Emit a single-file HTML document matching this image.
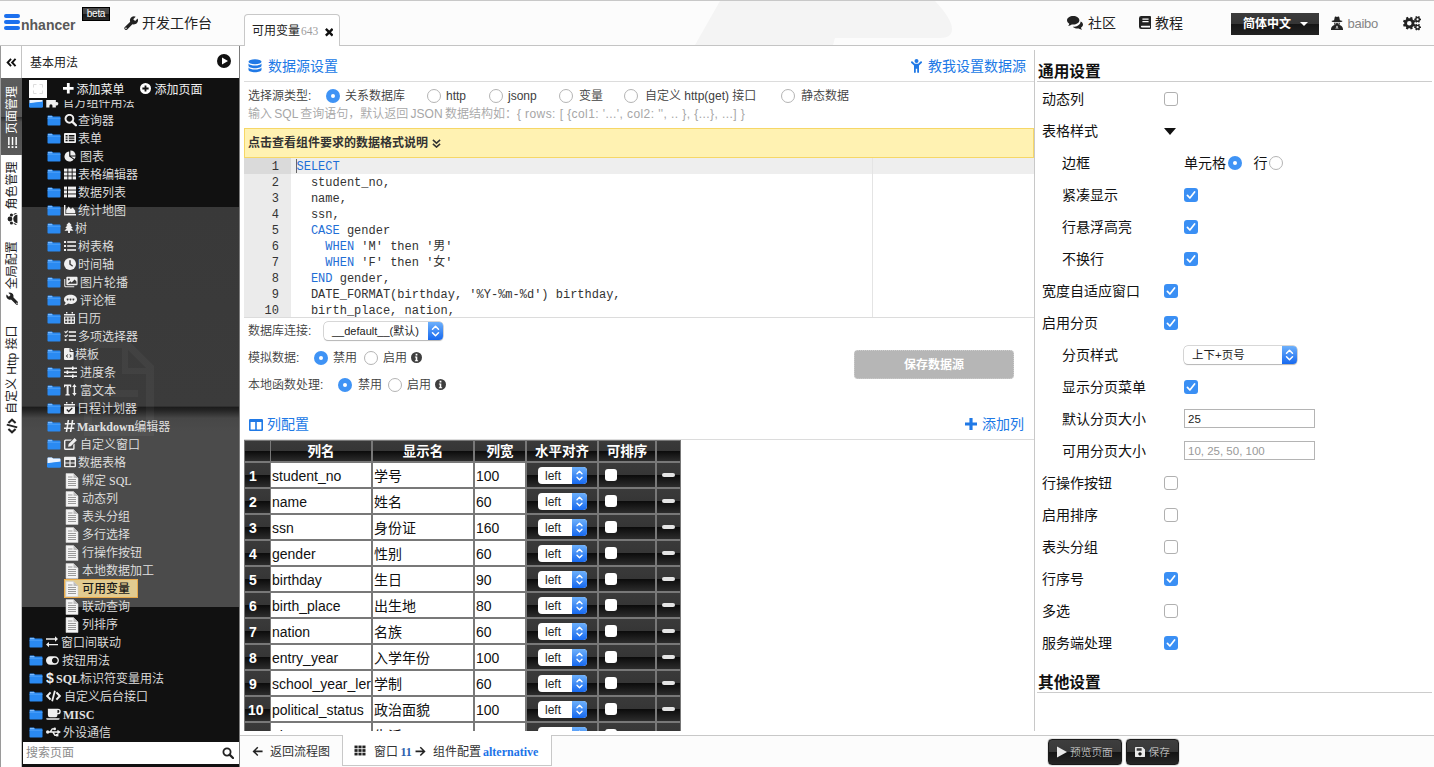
<!DOCTYPE html>
<html lang="zh-CN">
<head>
<meta charset="utf-8">
<title>Enhancer 开发工作台</title>
<style>
*{box-sizing:border-box;margin:0;padding:0}
html,body{width:1434px;height:767px;overflow:hidden;background:#fff}
body{position:relative;font-family:"Liberation Serif","Noto Sans CJK SC",serif;font-size:13px;color:#222}
.abs{position:absolute}
.sans{font-family:"Liberation Sans","Noto Sans CJK SC",sans-serif}
svg{display:block}
/* header */
#hdr{left:0;top:0;width:1434px;height:46px;background:#fcfcfc;border-top:1px solid #c8c8c8;border-bottom:1px solid #c4c4c4}
#hdr .t{position:absolute;white-space:nowrap;color:#222}
/* left vertical bar */
#vbar{left:0;top:46px;width:22px;height:721px;background:#fff;border-left:1px solid #9a9a9a}
.vtab{position:absolute;left:0;width:21px;white-space:nowrap}
.vtxt{position:absolute;transform-origin:0 0;transform:rotate(-90deg);white-space:nowrap;font-size:12px;line-height:20px;height:20px}
/* sidebar */
#side{left:22px;top:46px;width:218px;height:721px;background:#111}
#sidehead{left:0;top:0;width:218px;height:32px;background:#fff;border-right:1px solid #bbb}
.tr{position:absolute;height:18px;line-height:18px;color:#e2e2e2;font-size:12px;white-space:nowrap;font-weight:350}
.tr b{font-weight:bold}
.fold{position:absolute;width:14px;height:11px}
/* center */
#main{left:240px;top:46px;width:794px;height:689px;background:#fff;overflow:hidden}
.blue{color:#2079e6}
.lbl{position:absolute;font-size:12px;line-height:16px;color:#404040;white-space:nowrap;font-weight:350}
.radio{position:absolute;width:14px;height:14px;border-radius:50%;border:1px solid #b4b4b4;background:#fff}
.radio.on{border:none;background:#3f93f5}
.radio.on:after{content:"";position:absolute;left:4.700px;top:4.700px;width:4.600px;height:4.600px;border-radius:50%;background:#fff}
.mono{font-family:"Liberation Mono","Noto Sans CJK SC",monospace;font-size:12px;line-height:16px;height:16px}
.kw{color:#1f6fd6}
.th{position:absolute;background:linear-gradient(#3a3a3a 0,#363636 48%,#0c0c0c 52%,#2c2c2c 100%);color:#fff;font-weight:bold;font-size:13.500px;line-height:22px;text-align:center;white-space:nowrap;overflow:hidden}
.tdw{position:absolute;height:24px;background:#fff;color:#111;font-size:14px;line-height:27px;padding-left:1px;white-space:nowrap;overflow:hidden}
/* right */
#right{left:1034px;top:46px;width:400px;height:689px;background:#fff}
#right:before{content:"";position:absolute;left:0;top:4px;width:1px;height:681px;background:#c8c8c8}
.rl{position:absolute;font-size:14px;line-height:20px;color:#111;white-space:nowrap}
.cb{position:absolute;width:14px;height:14px;border-radius:3px;border:1px solid #b0b0b0;background:#fff}
.cb.on{border:none;background:#3a8ff4}
/* bottom */
#bot{left:240px;top:735px;width:1194px;height:32px;background:#fcfcfc;border-top:1px solid #c8c8c8}
</style>
</head>
<body>
<div id="hdr" class="abs"><svg class="abs" style="left:690px;top:0" width="270" height="44" viewBox="0 0 270 44"><path d="M5 44 L30 0 H245 Q262 18 262 28 Q262 37 250 37 H145 L143 44z" fill="#f4f4f4"/></svg>
<div class="abs" style="left:4px;top:13px;width:16px;height:4px;border-radius:2px;background:#1c70ee"></div>
<div class="abs" style="left:4px;top:19px;width:16px;height:4px;border-radius:2px;background:#1c70ee"></div>
<div class="abs" style="left:4px;top:25px;width:16px;height:4px;border-radius:2px;background:#1c70ee"></div>
<div class="t sans" style="left:21px;top:14px;font-size:14px;line-height:20px;font-weight:bold;color:#585858">nhancer</div>
<div class="abs sans" style="left:82px;top:6px;width:28px;height:14px;background:linear-gradient(#4a4a4a 0,#444 48%,#181818 52%,#2a2a2a 100%);border:1px solid #000;color:#fff;font-size:10px;line-height:11px;text-align:center;letter-spacing:-0.3px">beta</div>
<div class="abs" style="left:124px;top:15px;color:#222"><svg width="14" height="14" viewBox="0 0 13.5 13.5" fill="currentColor" style=""><path d="M13.120 2.520A3.900 3.900 0 1 1 11.280 .680L8.890 3.070 10.730 4.910z"/><path d="M7.400 6.400L2 11.800" stroke="currentColor" stroke-width="3.300" stroke-linecap="round"/><circle cx="1.900" cy="11.900" r=".75" fill="#fdfdfd"/></svg></div>
<div class="t sans" style="left:142px;top:12px;font-size:14px;line-height:20px">开发工作台</div>
<div class="abs" style="left:244px;top:13px;width:96px;height:33px;background:#fff;border:1px solid #c8c8c8;border-bottom:none;border-radius:4px 4px 0 0"></div>
<div class="t sans" style="left:252px;top:20.500px;font-size:12px;line-height:18px">可用变量</div>
<div class="t" style="left:301px;top:20.500px;font-size:12px;line-height:18px;color:#9c9c9c;font-size:11.500px">643</div>
<div class="abs" style="left:324.500px;top:27px;color:#111"><svg width="8.5" height="8.5" viewBox="0 0 10 10" fill="currentColor" style=""><path d="M2 0L5 3 8 0 10 2 7 5 10 8 8 10 5 7 2 10 0 8 3 5 0 2z"/></svg></div>
<div class="abs" style="left:1067px;top:15px;color:#222"><svg width="16" height="14" viewBox="0 0 16 14" fill="currentColor" style=""><path d="M6.200 0C9.600 0 12.400 1.900 12.400 4.300S9.600 8.600 6.200 8.600c-.5 0-1 0-1.400-.1C3.700 9.300 2.400 9.800 1 9.800c.7-.6 1.100-1.300 1.300-2.100C.9 6.900 0 5.700 0 4.300 0 1.900 2.800 0 6.200 0z"/><path d="M13.600 5.400c1.500.7 2.400 1.900 2.400 3.200 0 1.300-.8 2.400-2.100 3.100.2.700.6 1.400 1.300 2-1.300 0-2.500-.5-3.500-1.200-.4.100-.9.100-1.300.1-1.900 0-3.600-.7-4.600-1.800 4.300.100 7.800-2.300 7.800-5.400z"/></svg></div>
<div class="t sans" style="left:1088px;top:12px;font-size:14px;line-height:20px">社区</div>
<div class="abs" style="left:1139px;top:15px;color:#222"><svg width="12" height="13" viewBox="0 0 12 13" fill="currentColor" style=""><path fill-rule="evenodd" d="M2.200 0H11a1 1 0 0 1 1 1V12a1 1 0 0 1-1 1H2.200A2.200 2.200 0 0 1 0 10.800V2.200A2.200 2.200 0 0 1 2.200 0zM3.400 2.600v1.200h6.200V2.600zM3.400 5v1.200h6.200V5zM2.700 9.800a.8.800 0 0 0 0 1.600H11V9.800z"/></svg></div>
<div class="t sans" style="left:1155px;top:12px;font-size:14px;line-height:20px">教程</div>
<div class="abs sans" style="left:1231px;top:12px;width:88px;height:22px;background:linear-gradient(#3c3c3c 0,#353535 48%,#151515 52%,#222 100%);color:#fff;font-size:12px;font-weight:bold;line-height:22px;padding-left:12px">简体中文<span style="position:absolute;left:69px;top:9px;width:0;height:0;border:4px solid transparent;border-top:4px solid #fff"></span></div>
<div class="abs" style="left:1331px;top:15px;color:#222"><svg width="12" height="14" viewBox="0 0 12 14" fill="currentColor" style=""><path d="M3.100 4.300L3.700 1.200C3.800.7 4.300.4 4.800.600L6 1.100 7.200.600c.5-.2 1 .1 1.100.600L8.900 4.300C10.300 4.500 11.400 4.800 11.400 5.200c0 .600-2.400 1.100-5.400 1.100S.600 5.800.600 5.200C.600 4.800 1.700 4.500 3.100 4.300z"/><path fill-rule="evenodd" d="M3 6.800c.9.200 1.900.300 3 .300s2.100-.1 3-.3c0 .8-.2 1.500-.6 2.100C10.400 9.500 12 11 12 13.200V14H0v-.8C0 11 1.600 9.500 3.600 8.900 3.200 8.300 3 7.600 3 6.800zM5.300 9.400l-.6 3.600h.6l.5-2.600zM6.700 9.400l-.5 1 .5 2.600h.6zM3.600 7.400c0 .5.400.8.900.8s.9-.3.900-.8zM6.600 7.400c0 .5.400.8.900.8s.9-.3.900-.8z"/></svg></div>
<div class="t sans" style="left:1347.500px;top:12.500px;font-size:13px;line-height:20px;color:#858585;letter-spacing:-0.25px">baibo</div>
<div class="abs" style="left:1403px;top:15px;color:#222"><svg width="18" height="14.5" viewBox="0 0 18 14.500" fill="currentColor" style=""><path fill-rule="evenodd" d="M11.34 7.96L12.64 8.63L11.80 10.67L10.40 10.23L9.33 11.30L9.77 12.70L7.73 13.54L7.06 12.24L5.54 12.24L4.87 13.54L2.83 12.70L3.27 11.30L2.20 10.23L0.80 10.67L-0.04 8.63L1.26 7.96L1.26 6.44L-0.04 5.77L0.80 3.73L2.20 4.17L3.27 3.10L2.83 1.70L4.87 0.86L5.54 2.16L7.06 2.16L7.73 0.86L9.77 1.70L9.33 3.10L10.40 4.17L11.80 3.73L12.64 5.77L11.34 6.44zM8.60 7.20a2.3 2.3 0 1 0 -4.60 0a2.3 2.3 0 1 0 4.60 0zM17.07 2.60L18.02 2.64L18.02 4.16L17.07 4.20L16.53 5.14L16.97 5.98L15.65 6.74L15.14 5.94L14.06 5.94L13.55 6.74L12.23 5.98L12.67 5.14L12.13 4.20L11.18 4.16L11.18 2.64L12.13 2.60L12.67 1.66L12.23 0.82L13.55 0.06L14.06 0.86L15.14 0.86L15.65 0.06L16.97 0.82L16.53 1.66zM15.70 3.40a1.1 1.1 0 1 0 -2.20 0a1.1 1.1 0 1 0 2.20 0zM17.07 10.40L18.02 10.44L18.02 11.96L17.07 12.00L16.53 12.94L16.97 13.78L15.65 14.54L15.14 13.74L14.06 13.74L13.55 14.54L12.23 13.78L12.67 12.94L12.13 12.00L11.18 11.96L11.18 10.44L12.13 10.40L12.67 9.46L12.23 8.62L13.55 7.86L14.06 8.66L15.14 8.66L15.65 7.86L16.97 8.62L16.53 9.46zM15.70 11.20a1.1 1.1 0 1 0 -2.20 0a1.1 1.1 0 1 0 2.20 0z"/></svg></div></div>
<div id="vbar" class="abs"><div class="abs" style="left:0;top:0;width:21px;height:32px;border-right:1px solid #c4c4c4;background:#fff"></div>
<div class="abs" style="left:5px;top:12px;color:#111"><svg width="11" height="9" viewBox="0 0 11 10" fill="currentColor" style=""><path d="M5 1L1.200 5l3.800 4M10 1L6.200 5l3.800 4" fill="none" stroke="currentColor" stroke-width="2.100"/></svg></div>
<div class="abs" style="left:20px;top:32px;width:1px;height:689px;background:#c4c4c4"></div>
<div class="vtab" style="top:32px;height:77px;background:linear-gradient(#5c5c5c 0,#575757 50%,#2e2e2e 51%,#505050 57%,#5a5a5a 100%);color:#fff;"><div class="vtxt sans" style="left:1px;top:77px;width:77px;padding-left:6px;display:flex;align-items:center"><span style="display:inline-block;margin-right:2px"><svg width="13" height="11" viewBox="0 0 12 12" fill="currentColor" style=""><rect x="0" y="1" width="2" height="2"/><rect x="3.2" y="1.2" width="8.8" height="1.6"/><rect x="0" y="5" width="2" height="2"/><rect x="3.2" y="5.2" width="8.8" height="1.6"/><rect x="0" y="9" width="2" height="2"/><rect x="3.2" y="9.2" width="8.8" height="1.6"/></svg></span><span>页面管理</span></div></div>
<div class="vtab" style="top:109px;height:77px;color:#222;"><div class="vtxt sans" style="left:1px;top:77px;width:77px;padding-left:7.4px;display:flex;align-items:center"><span style="display:inline-block;margin-right:3.1px"><svg width="12" height="11" viewBox="0 0 13 11.500" fill="currentColor" style=""><circle cx="6.500" cy="3" r="2.600"/><path d="M2 11c0-2.600 2-4.400 4.500-4.400S11 8.400 11 11z"/><circle cx="2.200" cy="4.600" r="1.700"/><circle cx="10.800" cy="4.600" r="1.700"/><path d="M0 10c0-1.800 1-3 2.400-3.200C1.600 7.800 1.200 9 1.200 10zM13 10c0-1.800-1-3-2.400-3.200.8 1 1.200 2.200 1.200 3.200z"/></svg></span><span>角色管理</span></div></div>
<div class="vtab" style="top:186px;height:80px;color:#222;"><div class="vtxt sans" style="left:1px;top:80px;width:80px;padding-left:7px;display:flex;align-items:center"><span style="display:inline-block;margin-right:3.2px"><svg width="12.5" height="12.5" viewBox="0 0 13.500 13.500" fill="currentColor" style=""><path d="M13.120 2.520A3.900 3.900 0 1 1 11.280 .680L8.890 3.070 10.730 4.910z"/><path d="M7.400 6.400L2 11.800" stroke="currentColor" stroke-width="3.300" stroke-linecap="round"/><circle cx="1.900" cy="11.900" r=".75" fill="#fdfdfd"/></svg></span><span>全局配置</span></div></div>
<div class="vtab" style="top:266px;height:130px;color:#222;"><div class="vtxt sans" style="left:1px;top:130px;width:130px;padding-left:8px;display:flex;align-items:center"><span style="display:inline-block;margin-right:3.9px"><svg width="16" height="12" viewBox="0 0 15 12" fill="currentColor" style=""><path d="M4.600 2.400L1.200 6l3.400 3.600M10.400 2.400L13.800 6l-3.400 3.600" fill="none" stroke="currentColor" stroke-width="2" stroke-linejoin="miter"/><path d="M8.900 .8L6.100 11.200" stroke="currentColor" stroke-width="1.800"/></svg></span><span>自定义 Http 接口</span></div></div></div>
<div id="side" class="abs"><div class="abs" style="left:0;top:161px;width:217px;height:400px;background:linear-gradient(#393939 0,#3b3b3b 49.800%,#1b1b1b 50%,#242424 50.800%,#474747 52.800%,#4b4b4b 56%,#4b4b4b 100%)"></div>
<svg class="abs" style="left:62px;top:294px;opacity:.035" width="70" height="96" viewBox="0 0 70 96"><path fill-rule="evenodd" d="M0 0h44l26 26v70H0zM8 8v80h54V34H38V8zM44 10v18h18z" fill="#fff"/><path d="M16 50h38v7H16zM16 64h38v7H16z" fill="#fff"/></svg>
<div class="abs" style="left:7px;top:51px"><svg width="14" height="11" viewBox="0 0 14 11"><path d="M0.500 1.200a.8.800 0 0 1 .8-.8h3.600l1.200 1.200h6.600a.8.800 0 0 1 .8.800v7.400a.8.800 0 0 1-.8.800H1.300a.8.800 0 0 1-.8-.8z" fill="#2a8af2"/><path d="M.5 1.200a.8.800 0 0 1 .8-.8h3.600l1.200 1.200h6.600a.8.800 0 0 1 .8.800V5L.5 6.500z" fill="#eaf3ff"/><path d="M0 6.200L14 4.600v5.200a.8.800 0 0 1-.8.800H.8a.8.800 0 0 1-.8-.8z" fill="#2a8af2"/></svg></div><div class="abs" style="left:24px;top:50.0px;color:#f0f0f0"><svg width="13" height="12" viewBox="0 0 12.500 12" fill="currentColor" style=""><path d="M0 4h3.200a1.700 1.700 0 1 1 3 0H9.600v2.600a1.700 1.700 0 1 1 0 3V12H6.200V10.200a1.500 1.500 0 1 0-3 0V12H0z" transform="translate(0 -0.400)"/></svg></div><div class="tr" style="left:40.5px;top:48px">官方组件用法</div>
<div class="abs" style="left:25px;top:69px"><svg width="14" height="11" viewBox="0 0 14 11"><path d="M0.500 1.200a.8.800 0 0 1 .8-.8h3.600l1.200 1.200h6.600a.8.800 0 0 1 .8.800v7.400a.8.800 0 0 1-.8.800H1.300a.8.800 0 0 1-.8-.8z" fill="#2a8af2"/><path d="M1 1.300h3.800l.8.900H1z" fill="#9ccbff"/><path d="M.5 3.200h13v.6H.5z" fill="#56a6f8"/></svg></div><div class="abs" style="left:42px;top:67.5px;color:#f0f0f0"><svg width="13" height="13" viewBox="0 0.600 12 12" fill="currentColor" style=""><circle cx="5" cy="5" r="3.6" fill="none" stroke="currentColor" stroke-width="1.8"/><path d="M7.6 7.6 L11 11" stroke="currentColor" stroke-width="2.2" stroke-linecap="round"/></svg></div><div class="tr" style="left:56px;top:66px">查询器</div>
<div class="abs" style="left:25px;top:87px"><svg width="14" height="11" viewBox="0 0 14 11"><path d="M0.500 1.200a.8.800 0 0 1 .8-.8h3.600l1.200 1.200h6.600a.8.800 0 0 1 .8.800v7.400a.8.800 0 0 1-.8.800H1.300a.8.800 0 0 1-.8-.8z" fill="#2a8af2"/><path d="M1 1.300h3.800l.8.900H1z" fill="#9ccbff"/><path d="M.5 3.200h13v.6H.5z" fill="#56a6f8"/></svg></div><div class="abs" style="left:42px;top:86.0px;color:#f0f0f0"><svg width="12" height="12" viewBox="0 0 12 12" fill="currentColor" style=""><path fill-rule="evenodd" d="M1 1h10a1 1 0 0 1 1 1v8a1 1 0 0 1-1 1H1a1 1 0 0 1-1-1V2a1 1 0 0 1 1-1zM1.6 3v1.4h2V3zM4.8 3v1.4h5.6V3zM1.6 5.4v1.4h2V5.4zM4.8 5.4v1.4h5.6V5.4zM1.6 7.8v1.4h2V7.8zM4.8 7.8v1.4h5.6V7.8z"/></svg></div><div class="tr" style="left:56px;top:84px">表单</div>
<div class="abs" style="left:25px;top:105px"><svg width="14" height="11" viewBox="0 0 14 11"><path d="M0.500 1.200a.8.800 0 0 1 .8-.8h3.600l1.200 1.200h6.600a.8.800 0 0 1 .8.800v7.400a.8.800 0 0 1-.8.800H1.300a.8.800 0 0 1-.8-.8z" fill="#2a8af2"/><path d="M1 1.300h3.800l.8.900H1z" fill="#9ccbff"/><path d="M.5 3.200h13v.6H.5z" fill="#56a6f8"/></svg></div><div class="abs" style="left:42px;top:104.0px;color:#f0f0f0"><svg width="12" height="12" viewBox="0 0 12 12" fill="currentColor" style=""><path d="M5.2 1.6 A5 5 0 1 0 9.6 9.4 L5.2 6.6z"/><path d="M6.4 0.4 A5 5 0 0 1 11.6 5.4 L6.4 5.4z"/><path d="M6.8 6.6 L11.6 6.6 A5 5 0 0 1 10.6 8.9z"/></svg></div><div class="tr" style="left:58px;top:102px">图表</div>
<div class="abs" style="left:25px;top:123px"><svg width="14" height="11" viewBox="0 0 14 11"><path d="M0.500 1.200a.8.800 0 0 1 .8-.8h3.600l1.200 1.200h6.600a.8.800 0 0 1 .8.800v7.400a.8.800 0 0 1-.8.800H1.300a.8.800 0 0 1-.8-.8z" fill="#2a8af2"/><path d="M1 1.300h3.800l.8.900H1z" fill="#9ccbff"/><path d="M.5 3.200h13v.6H.5z" fill="#56a6f8"/></svg></div><div class="abs" style="left:42px;top:122.0px;color:#f0f0f0"><svg width="12" height="12" viewBox="0 0 12 12" fill="currentColor" style=""><rect x="0" y="0.6" width="3.4" height="3" /><rect x="0" y="4.5" width="3.4" height="3" /><rect x="0" y="8.4" width="3.4" height="3" /><rect x="4.3" y="0.6" width="3.4" height="3" /><rect x="4.3" y="4.5" width="3.4" height="3" /><rect x="4.3" y="8.4" width="3.4" height="3" /><rect x="8.6" y="0.6" width="3.4" height="3" /><rect x="8.6" y="4.5" width="3.4" height="3" /><rect x="8.6" y="8.4" width="3.4" height="3" /></svg></div><div class="tr" style="left:56px;top:120px">表格编辑器</div>
<div class="abs" style="left:25px;top:141px"><svg width="14" height="11" viewBox="0 0 14 11"><path d="M0.500 1.200a.8.800 0 0 1 .8-.8h3.600l1.200 1.200h6.600a.8.800 0 0 1 .8.800v7.400a.8.800 0 0 1-.8.800H1.300a.8.800 0 0 1-.8-.8z" fill="#2a8af2"/><path d="M1 1.300h3.800l.8.900H1z" fill="#9ccbff"/><path d="M.5 3.200h13v.6H.5z" fill="#56a6f8"/></svg></div><div class="abs" style="left:42px;top:140.0px;color:#f0f0f0"><svg width="12" height="12" viewBox="0 0 12 12" fill="currentColor" style=""><rect x="0" y="0.6" width="3" height="3"/><rect x="4" y="0.6" width="8" height="3"/><rect x="0" y="4.5" width="3" height="3"/><rect x="4" y="4.5" width="8" height="3"/><rect x="0" y="8.4" width="3" height="3"/><rect x="4" y="8.4" width="8" height="3"/></svg></div><div class="tr" style="left:56px;top:138px">数据列表</div>
<div class="abs" style="left:25px;top:159px"><svg width="14" height="11" viewBox="0 0 14 11"><path d="M0.500 1.200a.8.800 0 0 1 .8-.8h3.600l1.200 1.200h6.600a.8.800 0 0 1 .8.800v7.400a.8.800 0 0 1-.8.800H1.300a.8.800 0 0 1-.8-.8z" fill="#2a8af2"/><path d="M1 1.300h3.800l.8.900H1z" fill="#9ccbff"/><path d="M.5 3.200h13v.6H.5z" fill="#56a6f8"/></svg></div><div class="abs" style="left:42px;top:158.0px;color:#f0f0f0"><svg width="12" height="12" viewBox="0 0 12 12" fill="currentColor" style=""><path d="M0 1h1.4v9H12v1.4H0z"/><path d="M2.2 9.2V6l2.4-3.4 2.2 2.4 2-1.6 2.4 3.4v2.4z"/></svg></div><div class="tr" style="left:56px;top:156px">统计地图</div>
<div class="abs" style="left:25px;top:177px"><svg width="14" height="11" viewBox="0 0 14 11"><path d="M0.500 1.200a.8.800 0 0 1 .8-.8h3.600l1.200 1.200h6.600a.8.800 0 0 1 .8.800v7.400a.8.800 0 0 1-.8.800H1.300a.8.800 0 0 1-.8-.8z" fill="#2a8af2"/><path d="M1 1.300h3.800l.8.900H1z" fill="#9ccbff"/><path d="M.5 3.200h13v.6H.5z" fill="#56a6f8"/></svg></div><div class="abs" style="left:42px;top:176.0px;color:#f0f0f0"><svg width="10" height="12" viewBox="0.700 0 10.600 12" fill="currentColor" style=""><path d="M6 0 L9 3.2H7.6L10 6H8.2L10.8 9H7v2.4H5V9H1.2L3.8 6H2L4.4 3.2H3z"/></svg></div><div class="tr" style="left:53px;top:174px">树</div>
<div class="abs" style="left:25px;top:195px"><svg width="14" height="11" viewBox="0 0 14 11"><path d="M0.500 1.200a.8.800 0 0 1 .8-.8h3.600l1.200 1.200h6.600a.8.800 0 0 1 .8.800v7.400a.8.800 0 0 1-.8.800H1.300a.8.800 0 0 1-.8-.8z" fill="#2a8af2"/><path d="M1 1.300h3.800l.8.900H1z" fill="#9ccbff"/><path d="M.5 3.200h13v.6H.5z" fill="#56a6f8"/></svg></div><div class="abs" style="left:42px;top:194.0px;color:#f0f0f0"><svg width="12" height="12" viewBox="0 0 12 12" fill="currentColor" style=""><rect x="0" y="1" width="2" height="2"/><rect x="3.2" y="1.2" width="8.8" height="1.6"/><rect x="0" y="5" width="2" height="2"/><rect x="3.2" y="5.2" width="8.8" height="1.6"/><rect x="0" y="9" width="2" height="2"/><rect x="3.2" y="9.2" width="8.8" height="1.6"/></svg></div><div class="tr" style="left:56px;top:192px">树表格</div>
<div class="abs" style="left:25px;top:213px"><svg width="14" height="11" viewBox="0 0 14 11"><path d="M0.500 1.200a.8.800 0 0 1 .8-.8h3.600l1.200 1.200h6.600a.8.800 0 0 1 .8.800v7.400a.8.800 0 0 1-.8.800H1.300a.8.800 0 0 1-.8-.8z" fill="#2a8af2"/><path d="M1 1.300h3.800l.8.900H1z" fill="#9ccbff"/><path d="M.5 3.200h13v.6H.5z" fill="#56a6f8"/></svg></div><div class="abs" style="left:42px;top:212.0px;color:#f0f0f0"><svg width="12" height="12" viewBox="0 0 12 12" fill="currentColor" style=""><circle cx="6" cy="6" r="6"/><path d="M6 2.6V6.2L8.2 7.8" fill="none" stroke="#3a3a3a" stroke-width="1.4" stroke-linecap="round"/></svg></div><div class="tr" style="left:56px;top:210px">时间轴</div>
<div class="abs" style="left:25px;top:231px"><svg width="14" height="11" viewBox="0 0 14 11"><path d="M0.500 1.200a.8.800 0 0 1 .8-.8h3.600l1.200 1.200h6.600a.8.800 0 0 1 .8.800v7.400a.8.800 0 0 1-.8.800H1.300a.8.800 0 0 1-.8-.8z" fill="#2a8af2"/><path d="M1 1.300h3.800l.8.900H1z" fill="#9ccbff"/><path d="M.5 3.200h13v.6H.5z" fill="#56a6f8"/></svg></div><div class="abs" style="left:42px;top:230.0px;color:#f0f0f0"><svg width="14" height="12" viewBox="0 0 13.500 12" fill="currentColor" style=""><path d="M0 3v7a1.2 1.2 0 0 0 1.2 1.2H10v-1H1.4a.4.4 0 0 1-.4-.4V3z"/><path fill-rule="evenodd" d="M3 .8h9.4a.9.9 0 0 1 .9.9v6.6a.9.9 0 0 1-.9.9H3a.9.9 0 0 1-.9-.9V1.700a.9.9 0 0 1 .9-.9zM3.200 7.800h9V5.400L10.400 3.400 7.400 6.400 6.200 5.200 3.200 7.800zM4.600 2.200a1 1 0 1 0 .01 0z"/></svg></div><div class="tr" style="left:58px;top:228px">图片轮播</div>
<div class="abs" style="left:25px;top:249px"><svg width="14" height="11" viewBox="0 0 14 11"><path d="M0.500 1.200a.8.800 0 0 1 .8-.8h3.600l1.200 1.200h6.600a.8.800 0 0 1 .8.800v7.400a.8.800 0 0 1-.8.800H1.300a.8.800 0 0 1-.8-.8z" fill="#2a8af2"/><path d="M1 1.300h3.800l.8.900H1z" fill="#9ccbff"/><path d="M.5 3.200h13v.6H.5z" fill="#56a6f8"/></svg></div><div class="abs" style="left:42px;top:248.0px;color:#f0f0f0"><svg width="13" height="12" viewBox="0 0 13 12" fill="currentColor" style=""><path fill-rule="evenodd" d="M6.500 .8C10 .8 13 2.800 13 5.400S10 10 6.500 10c-.9 0-1.700-.1-2.500-.4C3 10.500 1.600 11.200.2 11.200c.8-.8 1.300-1.700 1.500-2.600C.6 7.800 0 6.700 0 5.400 0 2.800 3 .8 6.500.8zM3.600 4.600a.9.9 0 1 0 .01 0zM6.500 4.600a.9.9 0 1 0 .01 0zM9.400 4.600a.9.9 0 1 0 .01 0z"/></svg></div><div class="tr" style="left:58px;top:246px">评论框</div>
<div class="abs" style="left:25px;top:267px"><svg width="14" height="11" viewBox="0 0 14 11"><path d="M0.500 1.200a.8.800 0 0 1 .8-.8h3.600l1.200 1.200h6.600a.8.800 0 0 1 .8.800v7.400a.8.800 0 0 1-.8.800H1.300a.8.800 0 0 1-.8-.8z" fill="#2a8af2"/><path d="M1 1.300h3.800l.8.900H1z" fill="#9ccbff"/><path d="M.5 3.200h13v.6H.5z" fill="#56a6f8"/></svg></div><div class="abs" style="left:42px;top:266.0px;color:#f0f0f0"><svg width="11" height="12" viewBox="0 0 11 12" fill="currentColor" style=""><path fill-rule="evenodd" d="M2 0h1.400v1.400H2zM7.600 0H9v1.400H7.600zM0 2h11v1.600H0zM0 4.400h11V11a1 1 0 0 1-1 1H1a1 1 0 0 1-1-1zM1.200 5.600v2h2v-2zM4.500 5.600v2h2v-2zM7.800 5.600v2h2v-2zM1.200 8.800v2h2v-2zM4.500 8.800v2h2v-2zM7.800 8.800v2h2v-2z"/></svg></div><div class="tr" style="left:55px;top:264px">日历</div>
<div class="abs" style="left:25px;top:285px"><svg width="14" height="11" viewBox="0 0 14 11"><path d="M0.500 1.200a.8.800 0 0 1 .8-.8h3.600l1.200 1.200h6.600a.8.800 0 0 1 .8.800v7.400a.8.800 0 0 1-.8.800H1.300a.8.800 0 0 1-.8-.8z" fill="#2a8af2"/><path d="M1 1.300h3.800l.8.900H1z" fill="#9ccbff"/><path d="M.5 3.200h13v.6H.5z" fill="#56a6f8"/></svg></div><div class="abs" style="left:42px;top:284.0px;color:#f0f0f0"><svg width="12" height="12" viewBox="0 0 12 12" fill="currentColor" style=""><path d="M.2 1.800l.8-.8.8.8L3.400.2l.8.800L1.800 3.400z"/><path d="M.2 5.800l.8-.8.8.8L3.400 4.200l.8.800L1.800 7.400z"/><circle cx="1.600" cy="10" r="1.100"/><rect x="4.800" y="1.2" width="7.200" height="1.600"/><rect x="4.800" y="5.2" width="7.200" height="1.600"/><rect x="4.800" y="9.2" width="7.200" height="1.600"/></svg></div><div class="tr" style="left:56px;top:282px">多项选择器</div>
<div class="abs" style="left:25px;top:303px"><svg width="14" height="11" viewBox="0 0 14 11"><path d="M0.500 1.200a.8.800 0 0 1 .8-.8h3.600l1.200 1.200h6.600a.8.800 0 0 1 .8.800v7.400a.8.800 0 0 1-.8.800H1.300a.8.800 0 0 1-.8-.8z" fill="#2a8af2"/><path d="M1 1.300h3.800l.8.900H1z" fill="#9ccbff"/><path d="M.5 3.200h13v.6H.5z" fill="#56a6f8"/></svg></div><div class="abs" style="left:42px;top:302.0px;color:#f0f0f0"><svg width="10" height="12" viewBox="0 0 10 12" fill="currentColor" style=""><path fill-rule="evenodd" d="M0 1a1 1 0 0 1 1-1h4.600v3.400a.6.600 0 0 0 .6.600H9.600V11a1 1 0 0 1-1 1H1a1 1 0 0 1-1-1zM6.600 0l3 3H6.600zM3.600 6.200L1.800 8l1.800 1.800.6-.6L3 8l1.200-1.200zM6 6.200l-.6.600L6.600 8 5.400 9.200l.6.600L7.800 8z"/></svg></div><div class="tr" style="left:53px;top:300px">模板</div>
<div class="abs" style="left:25px;top:321px"><svg width="14" height="11" viewBox="0 0 14 11"><path d="M0.500 1.200a.8.800 0 0 1 .8-.8h3.600l1.200 1.200h6.600a.8.800 0 0 1 .8.800v7.400a.8.800 0 0 1-.8.800H1.300a.8.800 0 0 1-.8-.8z" fill="#2a8af2"/><path d="M1 1.300h3.800l.8.900H1z" fill="#9ccbff"/><path d="M.5 3.200h13v.6H.5z" fill="#56a6f8"/></svg></div><div class="abs" style="left:42px;top:320.0px;color:#f0f0f0"><svg width="13" height="12" viewBox="0 0 13 12" fill="currentColor" style=""><path d="M0 1.600h8v-1h1.600v1H13V3H9.600v1H8V3H0zM0 5.600h2.600v-1h1.600v1H13V7H4.200v1H2.600V7H0zM0 9.600h8v-1h1.600v1H13V11H9.600v1H8v-1H0z"/></svg></div><div class="tr" style="left:58px;top:318px">进度条</div>
<div class="abs" style="left:25px;top:339px"><svg width="14" height="11" viewBox="0 0 14 11"><path d="M0.500 1.200a.8.800 0 0 1 .8-.8h3.600l1.200 1.200h6.600a.8.800 0 0 1 .8.800v7.400a.8.800 0 0 1-.8.800H1.300a.8.800 0 0 1-.8-.8z" fill="#2a8af2"/><path d="M1 1.300h3.800l.8.900H1z" fill="#9ccbff"/><path d="M.5 3.200h13v.6H.5z" fill="#56a6f8"/></svg></div><div class="abs" style="left:42px;top:338.0px;color:#f0f0f0"><svg width="13" height="12" viewBox="0 0 13 12" fill="currentColor" style=""><path d="M0 .6h7.200v2.600H6.200l-.4-1.200H4.600v8l1.200.4v1H1.400v-1l1.200-.4v-8H1.400L1 3.200H0z"/><path d="M10.400 0l2.200 3h-1.500v6h1.500l-2.200 3-2.200-3h1.500V3H8.200z"/></svg></div><div class="tr" style="left:58px;top:336px">富文本</div>
<div class="abs" style="left:25px;top:357px"><svg width="14" height="11" viewBox="0 0 14 11"><path d="M0.500 1.200a.8.800 0 0 1 .8-.8h3.600l1.200 1.200h6.600a.8.800 0 0 1 .8.800v7.400a.8.800 0 0 1-.8.800H1.300a.8.800 0 0 1-.8-.8z" fill="#2a8af2"/><path d="M1 1.300h3.800l.8.900H1z" fill="#9ccbff"/><path d="M.5 3.200h13v.6H.5z" fill="#56a6f8"/></svg></div><div class="abs" style="left:42px;top:356.0px;color:#f0f0f0"><svg width="11" height="12" viewBox="0 0 11 12" fill="currentColor" style=""><path fill-rule="evenodd" d="M2 0h1.400v1.400H2zM7.600 0H9v1.400H7.600zM0 2h11v1.600H0zM0 4.400h11V11a1 1 0 0 1-1 1H1a1 1 0 0 1-1-1zM4.700 10.400l4-4-.9-.9-3.100 3.100L3.200 7.100l-.9.900z"/></svg></div><div class="tr" style="left:55px;top:354px">日程计划器</div>
<div class="abs" style="left:25px;top:375px"><svg width="14" height="11" viewBox="0 0 14 11"><path d="M0.500 1.200a.8.800 0 0 1 .8-.8h3.600l1.200 1.200h6.600a.8.800 0 0 1 .8.800v7.400a.8.800 0 0 1-.8.800H1.300a.8.800 0 0 1-.8-.8z" fill="#2a8af2"/><path d="M1 1.300h3.800l.8.900H1z" fill="#9ccbff"/><path d="M.5 3.200h13v.6H.5z" fill="#56a6f8"/></svg></div><div class="abs" style="left:42px;top:374.0px;color:#f0f0f0"><svg width="11" height="12" viewBox="0 0 11 12" fill="currentColor" style=""><path d="M3.600 0h1.600l-.5 3h2.600l.5-3h1.600l-.5 3H11v1.600H8.600l-.5 2.800H10.200V9H7.900l-.5 3H5.800l.5-3H3.700l-.5 3H1.600l.5-3H0V7.400h2.400l.5-2.800H.8V3h2.300zM4.500 4.600l-.5 2.800h2.600l.5-2.800z"/></svg></div><div class="tr" style="left:55px;top:372px"><b>Markdown</b>编辑器</div>
<div class="abs" style="left:25px;top:393px"><svg width="14" height="11" viewBox="0 0 14 11"><path d="M0.500 1.200a.8.800 0 0 1 .8-.8h3.600l1.200 1.200h6.600a.8.800 0 0 1 .8.800v7.400a.8.800 0 0 1-.8.800H1.300a.8.800 0 0 1-.8-.8z" fill="#2a8af2"/><path d="M1 1.300h3.800l.8.900H1z" fill="#9ccbff"/><path d="M.5 3.200h13v.6H.5z" fill="#56a6f8"/></svg></div><div class="abs" style="left:42px;top:392.0px;color:#f0f0f0"><svg width="13" height="12" viewBox="0 0 13 12" fill="currentColor" style=""><path d="M9.200 6.800l1.400-1.400V10.400A1.600 1.600 0 0 1 9 12H1.600A1.600 1.600 0 0 1 0 10.400V3A1.600 1.600 0 0 1 1.600 1.400H7.800L6.400 2.800H1.800a.4.400 0 0 0-.4.400v7a.4.400 0 0 0 .4.400h7a.4.400 0 0 0 .4-.4z"/><path d="M10.600 0l2.200 2.200-6 6-2.700.5.500-2.700zM11.400.200"/></svg></div><div class="tr" style="left:58px;top:390px">自定义窗口</div>
<div class="abs" style="left:25px;top:411px"><svg width="14" height="11" viewBox="0 0 14 11"><path d="M0.500 1.200a.8.800 0 0 1 .8-.8h3.600l1.200 1.200h6.600a.8.800 0 0 1 .8.800v7.400a.8.800 0 0 1-.8.800H1.300a.8.800 0 0 1-.8-.8z" fill="#2a8af2"/><path d="M.5 1.200a.8.800 0 0 1 .8-.8h3.600l1.200 1.200h6.600a.8.800 0 0 1 .8.800V5L.5 6.500z" fill="#eaf3ff"/><path d="M0 6.200L14 4.600v5.200a.8.800 0 0 1-.8.800H.8a.8.800 0 0 1-.8-.8z" fill="#2a8af2"/></svg></div><div class="abs" style="left:42px;top:410.0px;color:#f0f0f0"><svg width="12" height="12" viewBox="0 0 12 12" fill="currentColor" style=""><path fill-rule="evenodd" d="M1 .8h10a1 1 0 0 1 1 1v8.400a1 1 0 0 1-1 1H1a1 1 0 0 1-1-1V1.800a1 1 0 0 1 1-1zM1.400 4v2.400h4V4zM6.600 4v2.400h4V4zM1.400 7.600V10h4V7.600zM6.600 7.600V10h4V7.600z"/></svg></div><div class="tr" style="left:56px;top:408px">数据表格</div>
<div class="abs" style="left:43px;top:426.5px"><svg width="14" height="16" viewBox="0 0 14 16"><path d="M1 .5h7.500L13 5v10.500H1z" fill="#f4f4f4" stroke="#cfcfcf" stroke-width=".6"/><path d="M8.500 .5V5H13z" fill="#bdbdbd"/><path d="M3 4h4.500M3 6.500h8M3 8.500h8M3 10.500h8M3 12.500h8" stroke="#9a9a9a" stroke-width="1"/></svg></div>
<div class="tr" style="left:60px;top:426px;">绑定 SQL</div>
<div class="abs" style="left:43px;top:444.5px"><svg width="14" height="16" viewBox="0 0 14 16"><path d="M1 .5h7.500L13 5v10.500H1z" fill="#f4f4f4" stroke="#cfcfcf" stroke-width=".6"/><path d="M8.500 .5V5H13z" fill="#bdbdbd"/><path d="M3 4h4.500M3 6.500h8M3 8.500h8M3 10.500h8M3 12.500h8" stroke="#9a9a9a" stroke-width="1"/></svg></div>
<div class="tr" style="left:60px;top:444px;">动态列</div>
<div class="abs" style="left:43px;top:462.5px"><svg width="14" height="16" viewBox="0 0 14 16"><path d="M1 .5h7.500L13 5v10.500H1z" fill="#f4f4f4" stroke="#cfcfcf" stroke-width=".6"/><path d="M8.500 .5V5H13z" fill="#bdbdbd"/><path d="M3 4h4.500M3 6.500h8M3 8.500h8M3 10.500h8M3 12.500h8" stroke="#9a9a9a" stroke-width="1"/></svg></div>
<div class="tr" style="left:60px;top:462px;">表头分组</div>
<div class="abs" style="left:43px;top:480.5px"><svg width="14" height="16" viewBox="0 0 14 16"><path d="M1 .5h7.500L13 5v10.500H1z" fill="#f4f4f4" stroke="#cfcfcf" stroke-width=".6"/><path d="M8.500 .5V5H13z" fill="#bdbdbd"/><path d="M3 4h4.500M3 6.500h8M3 8.500h8M3 10.500h8M3 12.500h8" stroke="#9a9a9a" stroke-width="1"/></svg></div>
<div class="tr" style="left:60px;top:480px;">多行选择</div>
<div class="abs" style="left:43px;top:498.5px"><svg width="14" height="16" viewBox="0 0 14 16"><path d="M1 .5h7.500L13 5v10.500H1z" fill="#f4f4f4" stroke="#cfcfcf" stroke-width=".6"/><path d="M8.500 .5V5H13z" fill="#bdbdbd"/><path d="M3 4h4.500M3 6.500h8M3 8.500h8M3 10.500h8M3 12.500h8" stroke="#9a9a9a" stroke-width="1"/></svg></div>
<div class="tr" style="left:60px;top:498px;">行操作按钮</div>
<div class="abs" style="left:43px;top:516.5px"><svg width="14" height="16" viewBox="0 0 14 16"><path d="M1 .5h7.500L13 5v10.500H1z" fill="#f4f4f4" stroke="#cfcfcf" stroke-width=".6"/><path d="M8.500 .5V5H13z" fill="#bdbdbd"/><path d="M3 4h4.500M3 6.500h8M3 8.500h8M3 10.500h8M3 12.500h8" stroke="#9a9a9a" stroke-width="1"/></svg></div>
<div class="tr" style="left:60px;top:516px;">本地数据加工</div>
<div class="abs" style="left:42px;top:533px;width:74px;height:19px;background:#e2cb90;border:1px solid #e9a94a"></div>
<div class="abs" style="left:43px;top:534.5px"><svg width="14" height="16" viewBox="0 0 14 16"><path d="M1 .5h7.500L13 5v10.500H1z" fill="#f4f4f4" stroke="#cfcfcf" stroke-width=".6"/><path d="M8.500 .5V5H13z" fill="#bdbdbd"/><path d="M3 4h4.500M3 6.500h8M3 8.500h8M3 10.500h8M3 12.500h8" stroke="#9a9a9a" stroke-width="1"/></svg></div>
<div class="tr" style="left:60px;top:534px;color:#1a1a1a;font-weight:500;">可用变量</div>
<div class="abs" style="left:43px;top:552.5px"><svg width="14" height="16" viewBox="0 0 14 16"><path d="M1 .5h7.500L13 5v10.500H1z" fill="#f4f4f4" stroke="#cfcfcf" stroke-width=".6"/><path d="M8.500 .5V5H13z" fill="#bdbdbd"/><path d="M3 4h4.500M3 6.500h8M3 8.500h8M3 10.500h8M3 12.500h8" stroke="#9a9a9a" stroke-width="1"/></svg></div>
<div class="tr" style="left:60px;top:552px;">联动查询</div>
<div class="abs" style="left:43px;top:570.5px"><svg width="14" height="16" viewBox="0 0 14 16"><path d="M1 .5h7.500L13 5v10.500H1z" fill="#f4f4f4" stroke="#cfcfcf" stroke-width=".6"/><path d="M8.500 .5V5H13z" fill="#bdbdbd"/><path d="M3 4h4.500M3 6.500h8M3 8.500h8M3 10.500h8M3 12.500h8" stroke="#9a9a9a" stroke-width="1"/></svg></div>
<div class="tr" style="left:60px;top:570px;">列排序</div>
<div class="abs" style="left:7px;top:591px"><svg width="14" height="11" viewBox="0 0 14 11"><path d="M0.500 1.200a.8.800 0 0 1 .8-.8h3.600l1.200 1.200h6.600a.8.800 0 0 1 .8.800v7.400a.8.800 0 0 1-.8.800H1.300a.8.800 0 0 1-.8-.8z" fill="#2a8af2"/><path d="M1 1.300h3.800l.8.900H1z" fill="#9ccbff"/><path d="M.5 3.200h13v.6H.5z" fill="#56a6f8"/></svg></div><div class="abs" style="left:24px;top:590.0px;color:#f0f0f0"><svg width="12" height="12" viewBox="0 0 12 12" fill="currentColor" style=""><path d="M0 3h9V1l3 2.700L9 6.400V4.400H0zM12 8.600H3v-2L0 9.300 3 12v-2h9z" transform="translate(0 -0.700)"/></svg></div><div class="tr" style="left:39px;top:588px">窗口间联动</div>
<div class="abs" style="left:7px;top:609px"><svg width="14" height="11" viewBox="0 0 14 11"><path d="M0.500 1.200a.8.800 0 0 1 .8-.8h3.600l1.200 1.200h6.600a.8.800 0 0 1 .8.800v7.400a.8.800 0 0 1-.8.800H1.300a.8.800 0 0 1-.8-.8z" fill="#2a8af2"/><path d="M1 1.300h3.800l.8.900H1z" fill="#9ccbff"/><path d="M.5 3.200h13v.6H.5z" fill="#56a6f8"/></svg></div><div class="abs" style="left:24px;top:609.5px;color:#f0f0f0"><svg width="13" height="9" viewBox="0 1.600 13.100 8.700" fill="currentColor" style=""><path fill-rule="evenodd" d="M4.500 1.500h5a4.500 4.500 0 0 1 0 9h-5a4.500 4.500 0 0 1 0-9zM9.500 3a3 3 0 1 0 .01 0z" transform="scale(0.93) translate(0 0.4)"/></svg></div><div class="tr" style="left:40px;top:606px">按钮用法</div>
<div class="abs" style="left:7px;top:627px"><svg width="14" height="11" viewBox="0 0 14 11"><path d="M0.500 1.200a.8.800 0 0 1 .8-.8h3.600l1.200 1.200h6.600a.8.800 0 0 1 .8.800v7.400a.8.800 0 0 1-.8.800H1.300a.8.800 0 0 1-.8-.8z" fill="#2a8af2"/><path d="M1 1.300h3.800l.8.900H1z" fill="#9ccbff"/><path d="M.5 3.200h13v.6H.5z" fill="#56a6f8"/></svg></div><div class="abs" style="left:24px;top:625.0px;color:#f0f0f0"><svg width="8" height="14" viewBox="2 -1 8 14" fill="currentColor" style=""><text x="6" y="11" text-anchor="middle" font-family="Liberation Sans,sans-serif" font-weight="bold" font-size="14">$</text></svg></div><div class="tr" style="left:34px;top:624px"><b>SQL</b>标识符变量用法</div>
<div class="abs" style="left:7px;top:645px"><svg width="14" height="11" viewBox="0 0 14 11"><path d="M0.500 1.200a.8.800 0 0 1 .8-.8h3.600l1.200 1.200h6.600a.8.800 0 0 1 .8.800v7.400a.8.800 0 0 1-.8.800H1.300a.8.800 0 0 1-.8-.8z" fill="#2a8af2"/><path d="M1 1.300h3.800l.8.900H1z" fill="#9ccbff"/><path d="M.5 3.200h13v.6H.5z" fill="#56a6f8"/></svg></div><div class="abs" style="left:24px;top:644.0px;color:#f0f0f0"><svg width="15" height="12" viewBox="0 0 15 12" fill="currentColor" style=""><path d="M4.600 2.400L1.200 6l3.400 3.600M10.400 2.400L13.800 6l-3.400 3.600" fill="none" stroke="currentColor" stroke-width="2" stroke-linejoin="miter"/><path d="M8.900 .8L6.100 11.200" stroke="currentColor" stroke-width="1.800"/></svg></div><div class="tr" style="left:42px;top:642px">自定义后台接口</div>
<div class="abs" style="left:7px;top:663px"><svg width="14" height="11" viewBox="0 0 14 11"><path d="M0.500 1.200a.8.800 0 0 1 .8-.8h3.600l1.200 1.200h6.600a.8.800 0 0 1 .8.800v7.400a.8.800 0 0 1-.8.800H1.300a.8.800 0 0 1-.8-.8z" fill="#2a8af2"/><path d="M1 1.300h3.800l.8.900H1z" fill="#9ccbff"/><path d="M.5 3.200h13v.6H.5z" fill="#56a6f8"/></svg></div><div class="abs" style="left:24px;top:662.0px;color:#f0f0f0"><svg width="15" height="12" viewBox="0 0 13.500 11" fill="currentColor" style=""><path fill-rule="evenodd" d="M1.600.6H10.400h.4a2.600 2.600 0 0 1 0 5.200H10.400V6.400A2 2 0 0 1 8.400 8.400H3.600A2 2 0 0 1 1.600 6.400zM10.400 1.900V4.500h.4a1.300 1.300 0 0 0 0-2.600zM0 9.400h12.400a1.400 1.400 0 0 1-1.400 1.400H1.400A1.400 1.400 0 0 1 0 9.400z"/></svg></div><div class="tr" style="left:41px;top:660px"><b>MISC</b></div>
<div class="abs" style="left:7px;top:681px"><svg width="14" height="11" viewBox="0 0 14 11"><path d="M0.500 1.200a.8.800 0 0 1 .8-.8h3.600l1.200 1.200h6.600a.8.800 0 0 1 .8.800v7.400a.8.800 0 0 1-.8.800H1.300a.8.800 0 0 1-.8-.8z" fill="#2a8af2"/><path d="M1 1.300h3.800l.8.900H1z" fill="#9ccbff"/><path d="M.5 3.200h13v.6H.5z" fill="#56a6f8"/></svg></div><div class="abs" style="left:24px;top:680.0px;color:#f0f0f0"><svg width="15" height="12" viewBox="0 0 15 12" fill="currentColor" style=""><circle cx="1.700" cy="6" r="1.700"/><path d="M1.700 6H12M4.200 6L6.300 2.900H8M6.800 6L8.900 9.200H10.400" fill="none" stroke="currentColor" stroke-width="1.400"/><path d="M11.400 3.700L15 6l-3.600 2.300z"/><circle cx="8.700" cy="2.900" r="1.300"/><rect x="10" y="8" width="2.400" height="2.400"/></svg></div><div class="tr" style="left:41px;top:678px">外设通信</div>
<div id="sidehead" class="abs"></div>
<div class="abs sans" style="left:8px;top:8px;font-size:12px;line-height:18px;color:#222">基本用法</div>
<div class="abs" style="left:195px;top:8px;color:#111"><svg width="14" height="14" viewBox="0 0 14 14" fill="currentColor" style=""><path fill-rule="evenodd" d="M7 0a7 7 0 1 1 0 14A7 7 0 0 1 7 0zM5 3.400v7.200L11 7z"/></svg></div>
<div class="abs" style="left:0;top:32px;width:217px;height:22px;background:#111"></div>
<div class="abs" style="left:7px;top:34px;width:18px;height:18px;background:#fff"><svg width="18" height="18" viewBox="0 0 18 18"><path d="M4.500 7.500v-3h3M10.500 4.500h3v3M13.500 10.500v3h-3M7.500 13.500h-3v-3" fill="none" stroke="#ddd" stroke-width="1"/></svg></div>
<div class="abs" style="left:40.500px;top:37px;color:#fff"><svg width="11" height="11" viewBox="0 0 11 11" fill="currentColor" style=""><path d="M4.200 0h3v4.200h4.200v3H7.200v4.200h-3V7.200H0v-3h4.200z" transform="scale(0.93)"/></svg></div>
<div class="tr sans" style="left:54.500px;top:34.500px;font-size:12px;color:#f2f2f2;font-weight:400">添加菜单</div>
<div class="abs" style="left:118px;top:37px;color:#fff"><svg width="11" height="11" viewBox="0 0 12 12" fill="currentColor" style=""><path fill-rule="evenodd" d="M6 0a6 6 0 1 1 0 12A6 6 0 0 1 6 0zM5 2.600V5H2.600v2H5v2.400h2V7h2.400V5H7V2.600z"/></svg></div>
<div class="tr sans" style="left:132.500px;top:34.500px;font-size:12px;color:#f2f2f2;font-weight:400">添加页面</div>
<div class="abs" style="left:217px;top:0;width:1px;height:721px;background:#7c7c7c"></div>
<div class="abs" style="left:1px;top:696px;width:216px;height:22px;background:#fff"></div>
<div class="abs sans" style="left:4px;top:698px;font-size:12px;line-height:18px;color:#8c8c8c">搜索页面</div>
<div class="abs" style="left:200px;top:701px;color:#222"><svg width="12" height="12" viewBox="0 0 12 12" fill="currentColor" style=""><circle cx="5" cy="5" r="3.6" fill="none" stroke="currentColor" stroke-width="1.8"/><path d="M7.6 7.6 L11 11" stroke="currentColor" stroke-width="2.2" stroke-linecap="round"/></svg></div></div>
<div id="main" class="abs sans"><div class="abs blue" style="left:8px;top:13px"><svg width="14" height="14" viewBox="0 0 14 13.500" fill="currentColor" style=""><ellipse cx="7" cy="2.500" rx="6.500" ry="2.500"/><path d="M.5 4.300c1 1.400 3.600 2 6.500 2s5.500-.6 6.500-2v2.200c0 1.400-2.900 2.500-6.500 2.500S.5 7.900.5 6.500z"/><path d="M.5 8.300c1 1.400 3.600 2 6.500 2s5.500-.6 6.500-2v2.200c0 1.400-2.900 2.500-6.500 2.500S.5 11.900.5 10.500z"/></svg></div>
<div class="abs blue" style="left:28px;top:10px;font-size:14px;line-height:20px;white-space:nowrap">数据源设置</div>
<div class="abs blue" style="left:671px;top:13px"><svg width="11" height="14" viewBox="0 0 11 14" fill="currentColor" style=""><circle cx="5.500" cy="2" r="2"/><path d="M.3 2.600a.9.900 0 0 1 1.300 0L3.800 4.800H7.200L9.400 2.600a.9.900 0 0 1 1.300 1.300L8 6.600V13a.9.900 0 0 1-1.800 0V9.800H4.800V13A.9.900 0 0 1 3 13V6.600L.3 3.900a.9.900 0 0 1 0-1.300z"/></svg></div>
<div class="abs blue" style="left:688px;top:10px;font-size:14px;line-height:20px;white-space:nowrap">教我设置数据源</div>
<div class="abs" style="left:4px;top:35px;width:790px;height:1px;background:#dcdcdc"></div>
<div class="lbl" style="left:8px;top:42px;">选择源类型:</div>
<div class="radio on" style="left:86px;top:43px"></div>
<div class="lbl" style="left:105px;top:42px;">关系数据库</div>
<div class="radio" style="left:187px;top:43px"></div>
<div class="lbl" style="left:206px;top:42px;">http</div>
<div class="radio" style="left:249px;top:43px"></div>
<div class="lbl" style="left:268px;top:42px;">jsonp</div>
<div class="radio" style="left:319px;top:43px"></div>
<div class="lbl" style="left:339px;top:42px;">变量</div>
<div class="radio" style="left:384px;top:43px"></div>
<div class="lbl" style="left:405px;top:42px;">自定义 http(get) 接口</div>
<div class="radio" style="left:541px;top:43px"></div>
<div class="lbl" style="left:561px;top:42px;">静态数据</div>
<div class="lbl" style="left:8px;top:60px;color:#a6a6a6;word-spacing:-1px">输入 SQL 查询语句，默认返回 JSON 数据结构如：<span style="letter-spacing:.42px;word-spacing:0">{ rows: [ {col1: '...', col2: '', .. }, {...}, ...] }</span></div>
<div class="abs" style="left:4px;top:82px;width:790px;height:30px;background:#fff2b2;border:1px solid #f6d767"></div>
<div class="lbl" style="left:8px;top:89px;font-weight:bold;color:#333">点击查看组件要求的数据格式说明</div>
<div class="abs" style="left:192px;top:93px;color:#333"><svg width="9" height="9" viewBox="0 0 10 10" fill="currentColor" style=""><path d="M1 1l4 3.600L9 1M1 5.400l4 3.600 4-3.600" fill="none" stroke="currentColor" stroke-width="1.700"/></svg></div>
<div class="abs" style="left:4px;top:112px;width:790px;height:160px;overflow:hidden;border-bottom:1px solid #dcdcdc">
<div class="abs" style="left:0;top:0;width:47px;height:160px;background:#ebebeb"></div>
<div class="abs" style="left:0;top:0;width:47px;height:16px;background:#dadada"></div>
<div class="abs" style="left:47px;top:0;width:743px;height:16px;background:#eeeeee"></div>
<div class="abs" style="left:628px;top:0;width:1px;height:160px;background:#e4e4e4"></div>
<div class="abs" style="left:52px;top:1px;width:1px;height:14px;background:#666"></div>
<div class="abs mono" style="left:0;top:1px;width:35px;text-align:right;color:#333">1</div>
<div class="abs mono" style="left:52.500px;top:1px;white-space:pre;color:#333"><span class="kw">SELECT</span></div>
<div class="abs mono" style="left:0;top:17px;width:35px;text-align:right;color:#333">2</div>
<div class="abs mono" style="left:52.500px;top:17px;white-space:pre;color:#333">  student_no,</div>
<div class="abs mono" style="left:0;top:33px;width:35px;text-align:right;color:#333">3</div>
<div class="abs mono" style="left:52.500px;top:33px;white-space:pre;color:#333">  name,</div>
<div class="abs mono" style="left:0;top:49px;width:35px;text-align:right;color:#333">4</div>
<div class="abs mono" style="left:52.500px;top:49px;white-space:pre;color:#333">  ssn,</div>
<div class="abs mono" style="left:0;top:65px;width:35px;text-align:right;color:#333">5</div>
<div class="abs mono" style="left:52.500px;top:65px;white-space:pre;color:#333">  <span class="kw">CASE</span> gender</div>
<div class="abs mono" style="left:0;top:81px;width:35px;text-align:right;color:#333">6</div>
<div class="abs mono" style="left:52.500px;top:81px;white-space:pre;color:#333">    <span class="kw">WHEN</span> 'M' then '男'</div>
<div class="abs mono" style="left:0;top:97px;width:35px;text-align:right;color:#333">7</div>
<div class="abs mono" style="left:52.500px;top:97px;white-space:pre;color:#333">    <span class="kw">WHEN</span> 'F' then '女'</div>
<div class="abs mono" style="left:0;top:113px;width:35px;text-align:right;color:#333">8</div>
<div class="abs mono" style="left:52.500px;top:113px;white-space:pre;color:#333">  <span class="kw">END</span> gender,</div>
<div class="abs mono" style="left:0;top:129px;width:35px;text-align:right;color:#333">9</div>
<div class="abs mono" style="left:52.500px;top:129px;white-space:pre;color:#333">  DATE_FORMAT(birthday, '%Y-%m-%d') birthday,</div>
<div class="abs mono" style="left:0;top:145px;width:35px;text-align:right;color:#333">10</div>
<div class="abs mono" style="left:52.500px;top:145px;white-space:pre;color:#333">  birth_place, nation,</div>
</div>
<div class="lbl" style="left:8px;top:277px;">数据库连接:</div>
<div class="abs" style="left:84px;top:276px;width:119px;height:18px;background:#fff;border-radius:4px;box-shadow:0 0 0 .5px #b0b0b0,0 1px 1px rgba(0,0,0,.25);overflow:hidden"><div class="abs" style="left:8px;top:0;font-size:11px;line-height:18px;color:#222;white-space:nowrap">__default__(默认)</div><div class="abs" style="right:0;top:0;width:15px;height:18px;background:linear-gradient(#6db0fb,#1769ef)"><svg width="15" height="18" viewBox="0 0 15 18"><path d="M4.500 7.2L7.500 4.2l3 3M4.500 10.8l3 3 3-3" fill="none" stroke="#fff" stroke-width="1.500" stroke-linecap="round" stroke-linejoin="round"/></svg></div></div>
<div class="lbl" style="left:8px;top:304px;">模拟数据:</div>
<div class="radio on" style="left:74px;top:305px"></div>
<div class="lbl" style="left:93px;top:304px;">禁用</div>
<div class="radio" style="left:123.5px;top:305px"></div>
<div class="lbl" style="left:143px;top:304px;">启用</div>
<div class="abs" style="left:171px;top:306px;color:#3e3e3e"><svg width="11" height="11" viewBox="0 0 11 11" fill="currentColor" style=""><path fill-rule="evenodd" d="M5.500 0a5.500 5.500 0 1 1 0 11 5.500 5.500 0 0 1 0-11zM4.600 1.800v1.800h1.800V1.800zM3.900 4.600v1h.8v2.600h-.8v1h3.200v-1h-.8V4.600z"/></svg></div>
<div class="lbl" style="left:8px;top:331px;">本地函数处理:</div>
<div class="radio on" style="left:98px;top:332px"></div>
<div class="lbl" style="left:118px;top:331px;">禁用</div>
<div class="radio" style="left:147.5px;top:332px"></div>
<div class="lbl" style="left:167px;top:331px;">启用</div>
<div class="abs" style="left:195px;top:333px;color:#3e3e3e"><svg width="11" height="11" viewBox="0 0 11 11" fill="currentColor" style=""><path fill-rule="evenodd" d="M5.500 0a5.500 5.500 0 1 1 0 11 5.500 5.500 0 0 1 0-11zM4.600 1.800v1.800h1.800V1.800zM3.900 4.600v1h.8v2.600h-.8v1h3.200v-1h-.8V4.600z"/></svg></div>
<div class="abs" style="left:614px;top:304px;width:160px;height:28.500px;background:#b6b6b6;border:1px dotted #cfcfcf;border-radius:4px;color:#fff;font-weight:bold;font-size:12px;line-height:28.500px;text-align:center">保存数据源</div>
<div class="abs blue" style="left:9px;top:372.5px"><svg width="14" height="12" viewBox="0 0 14 12" fill="currentColor" style=""><path fill-rule="evenodd" d="M1.200 0h11.600A1.200 1.200 0 0 1 14 1.200v9.600A1.200 1.200 0 0 1 12.800 12H1.200A1.200 1.200 0 0 1 0 10.800V1.200A1.200 1.200 0 0 1 1.200 0zM1.600 3v7.400h4.600V3zM7.800 3v7.400h4.600V3z"/></svg></div>
<div class="abs blue" style="left:27px;top:368px;font-size:14px;line-height:20px;white-space:nowrap">列配置</div>
<div class="abs blue" style="left:725px;top:372px"><svg width="12" height="12" viewBox="0 0 10.600 10.600" fill="currentColor" style=""><path d="M4.200 0h3v4.200h4.200v3H7.200v4.200h-3V7.200H0v-3h4.200z" transform="scale(0.93)"/></svg></div>
<div class="abs blue" style="left:742px;top:368px;font-size:14px;line-height:20px;white-space:nowrap">添加列</div>
<div class="abs" style="left:4px;top:393px;width:790px;height:1px;background:#dcdcdc"></div>
<div class="abs" style="left:4px;top:394px;width:437px;height:291px;overflow:hidden;background:#787878">
<div class="th" style="left:1px;top:1px;width:25px;height:20px"></div>
<div class="th" style="left:27px;top:1px;width:100px;height:20px">列名</div>
<div class="th" style="left:129px;top:1px;width:100px;height:20px">显示名</div>
<div class="th" style="left:231px;top:1px;width:50px;height:20px">列宽</div>
<div class="th" style="left:283px;top:1px;width:70px;height:20px">水平对齐</div>
<div class="th" style="left:355px;top:1px;width:56px;height:20px">可排序</div>
<div class="th" style="left:413px;top:1px;width:23px;height:20px"></div>
<div class="th" style="left:1px;top:23px;width:25px;height:24px;line-height:26px;text-align:left;padding-left:4px;font-size:14px">1</div>
<div class="tdw" style="left:27px;top:23px;width:100px">student_no</div>
<div class="tdw" style="left:129px;top:23px;width:100px">学号</div>
<div class="tdw" style="left:231px;top:23px;width:50px">100</div>
<div class="th" style="left:283px;top:23px;width:70px;height:24px"></div>
<div class="abs" style="left:294px;top:27px;width:49px;height:17px;background:#fff;border-radius:4px;overflow:hidden"><div class="abs" style="left:7px;top:0;font-size:12px;line-height:18.500px;color:#222">left</div><div class="abs" style="right:0;top:0;width:15px;height:17px;background:linear-gradient(#6db0fb,#1769ef)"><svg width="15" height="17" viewBox="0 0 15 17"><path d="M5 6.800L7.500 4.300l2.500 2.500M5 10.200l2.500 2.500 2.500-2.500" fill="none" stroke="#fff" stroke-width="1.400" stroke-linecap="round" stroke-linejoin="round"/></svg></div></div>
<div class="th" style="left:355px;top:23px;width:56px;height:24px"></div>
<div class="abs" style="left:361px;top:29px;width:12px;height:12px;background:#fff;border-radius:3px"></div>
<div class="th" style="left:413px;top:23px;width:23px;height:24px"></div>
<div class="abs" style="left:418px;top:33px;width:13px;height:4px;background:#e4e4e4;border-radius:2px"></div>
<div class="th" style="left:1px;top:49px;width:25px;height:24px;line-height:26px;text-align:left;padding-left:4px;font-size:14px">2</div>
<div class="tdw" style="left:27px;top:49px;width:100px">name</div>
<div class="tdw" style="left:129px;top:49px;width:100px">姓名</div>
<div class="tdw" style="left:231px;top:49px;width:50px">60</div>
<div class="th" style="left:283px;top:49px;width:70px;height:24px"></div>
<div class="abs" style="left:294px;top:53px;width:49px;height:17px;background:#fff;border-radius:4px;overflow:hidden"><div class="abs" style="left:7px;top:0;font-size:12px;line-height:18.500px;color:#222">left</div><div class="abs" style="right:0;top:0;width:15px;height:17px;background:linear-gradient(#6db0fb,#1769ef)"><svg width="15" height="17" viewBox="0 0 15 17"><path d="M5 6.800L7.500 4.300l2.500 2.500M5 10.200l2.500 2.500 2.500-2.500" fill="none" stroke="#fff" stroke-width="1.400" stroke-linecap="round" stroke-linejoin="round"/></svg></div></div>
<div class="th" style="left:355px;top:49px;width:56px;height:24px"></div>
<div class="abs" style="left:361px;top:55px;width:12px;height:12px;background:#fff;border-radius:3px"></div>
<div class="th" style="left:413px;top:49px;width:23px;height:24px"></div>
<div class="abs" style="left:418px;top:59px;width:13px;height:4px;background:#e4e4e4;border-radius:2px"></div>
<div class="th" style="left:1px;top:75px;width:25px;height:24px;line-height:26px;text-align:left;padding-left:4px;font-size:14px">3</div>
<div class="tdw" style="left:27px;top:75px;width:100px">ssn</div>
<div class="tdw" style="left:129px;top:75px;width:100px">身份证</div>
<div class="tdw" style="left:231px;top:75px;width:50px">160</div>
<div class="th" style="left:283px;top:75px;width:70px;height:24px"></div>
<div class="abs" style="left:294px;top:79px;width:49px;height:17px;background:#fff;border-radius:4px;overflow:hidden"><div class="abs" style="left:7px;top:0;font-size:12px;line-height:18.500px;color:#222">left</div><div class="abs" style="right:0;top:0;width:15px;height:17px;background:linear-gradient(#6db0fb,#1769ef)"><svg width="15" height="17" viewBox="0 0 15 17"><path d="M5 6.800L7.500 4.300l2.500 2.500M5 10.200l2.500 2.500 2.500-2.500" fill="none" stroke="#fff" stroke-width="1.400" stroke-linecap="round" stroke-linejoin="round"/></svg></div></div>
<div class="th" style="left:355px;top:75px;width:56px;height:24px"></div>
<div class="abs" style="left:361px;top:81px;width:12px;height:12px;background:#fff;border-radius:3px"></div>
<div class="th" style="left:413px;top:75px;width:23px;height:24px"></div>
<div class="abs" style="left:418px;top:85px;width:13px;height:4px;background:#e4e4e4;border-radius:2px"></div>
<div class="th" style="left:1px;top:101px;width:25px;height:24px;line-height:26px;text-align:left;padding-left:4px;font-size:14px">4</div>
<div class="tdw" style="left:27px;top:101px;width:100px">gender</div>
<div class="tdw" style="left:129px;top:101px;width:100px">性别</div>
<div class="tdw" style="left:231px;top:101px;width:50px">60</div>
<div class="th" style="left:283px;top:101px;width:70px;height:24px"></div>
<div class="abs" style="left:294px;top:105px;width:49px;height:17px;background:#fff;border-radius:4px;overflow:hidden"><div class="abs" style="left:7px;top:0;font-size:12px;line-height:18.500px;color:#222">left</div><div class="abs" style="right:0;top:0;width:15px;height:17px;background:linear-gradient(#6db0fb,#1769ef)"><svg width="15" height="17" viewBox="0 0 15 17"><path d="M5 6.800L7.500 4.300l2.500 2.500M5 10.200l2.500 2.500 2.500-2.500" fill="none" stroke="#fff" stroke-width="1.400" stroke-linecap="round" stroke-linejoin="round"/></svg></div></div>
<div class="th" style="left:355px;top:101px;width:56px;height:24px"></div>
<div class="abs" style="left:361px;top:107px;width:12px;height:12px;background:#fff;border-radius:3px"></div>
<div class="th" style="left:413px;top:101px;width:23px;height:24px"></div>
<div class="abs" style="left:418px;top:111px;width:13px;height:4px;background:#e4e4e4;border-radius:2px"></div>
<div class="th" style="left:1px;top:127px;width:25px;height:24px;line-height:26px;text-align:left;padding-left:4px;font-size:14px">5</div>
<div class="tdw" style="left:27px;top:127px;width:100px">birthday</div>
<div class="tdw" style="left:129px;top:127px;width:100px">生日</div>
<div class="tdw" style="left:231px;top:127px;width:50px">90</div>
<div class="th" style="left:283px;top:127px;width:70px;height:24px"></div>
<div class="abs" style="left:294px;top:131px;width:49px;height:17px;background:#fff;border-radius:4px;overflow:hidden"><div class="abs" style="left:7px;top:0;font-size:12px;line-height:18.500px;color:#222">left</div><div class="abs" style="right:0;top:0;width:15px;height:17px;background:linear-gradient(#6db0fb,#1769ef)"><svg width="15" height="17" viewBox="0 0 15 17"><path d="M5 6.800L7.500 4.300l2.500 2.500M5 10.200l2.500 2.500 2.500-2.500" fill="none" stroke="#fff" stroke-width="1.400" stroke-linecap="round" stroke-linejoin="round"/></svg></div></div>
<div class="th" style="left:355px;top:127px;width:56px;height:24px"></div>
<div class="abs" style="left:361px;top:133px;width:12px;height:12px;background:#fff;border-radius:3px"></div>
<div class="th" style="left:413px;top:127px;width:23px;height:24px"></div>
<div class="abs" style="left:418px;top:137px;width:13px;height:4px;background:#e4e4e4;border-radius:2px"></div>
<div class="th" style="left:1px;top:153px;width:25px;height:24px;line-height:26px;text-align:left;padding-left:4px;font-size:14px">6</div>
<div class="tdw" style="left:27px;top:153px;width:100px">birth_place</div>
<div class="tdw" style="left:129px;top:153px;width:100px">出生地</div>
<div class="tdw" style="left:231px;top:153px;width:50px">80</div>
<div class="th" style="left:283px;top:153px;width:70px;height:24px"></div>
<div class="abs" style="left:294px;top:157px;width:49px;height:17px;background:#fff;border-radius:4px;overflow:hidden"><div class="abs" style="left:7px;top:0;font-size:12px;line-height:18.500px;color:#222">left</div><div class="abs" style="right:0;top:0;width:15px;height:17px;background:linear-gradient(#6db0fb,#1769ef)"><svg width="15" height="17" viewBox="0 0 15 17"><path d="M5 6.800L7.500 4.300l2.500 2.500M5 10.200l2.500 2.500 2.500-2.500" fill="none" stroke="#fff" stroke-width="1.400" stroke-linecap="round" stroke-linejoin="round"/></svg></div></div>
<div class="th" style="left:355px;top:153px;width:56px;height:24px"></div>
<div class="abs" style="left:361px;top:159px;width:12px;height:12px;background:#fff;border-radius:3px"></div>
<div class="th" style="left:413px;top:153px;width:23px;height:24px"></div>
<div class="abs" style="left:418px;top:163px;width:13px;height:4px;background:#e4e4e4;border-radius:2px"></div>
<div class="th" style="left:1px;top:179px;width:25px;height:24px;line-height:26px;text-align:left;padding-left:4px;font-size:14px">7</div>
<div class="tdw" style="left:27px;top:179px;width:100px">nation</div>
<div class="tdw" style="left:129px;top:179px;width:100px">名族</div>
<div class="tdw" style="left:231px;top:179px;width:50px">60</div>
<div class="th" style="left:283px;top:179px;width:70px;height:24px"></div>
<div class="abs" style="left:294px;top:183px;width:49px;height:17px;background:#fff;border-radius:4px;overflow:hidden"><div class="abs" style="left:7px;top:0;font-size:12px;line-height:18.500px;color:#222">left</div><div class="abs" style="right:0;top:0;width:15px;height:17px;background:linear-gradient(#6db0fb,#1769ef)"><svg width="15" height="17" viewBox="0 0 15 17"><path d="M5 6.800L7.500 4.300l2.500 2.500M5 10.200l2.500 2.500 2.500-2.500" fill="none" stroke="#fff" stroke-width="1.400" stroke-linecap="round" stroke-linejoin="round"/></svg></div></div>
<div class="th" style="left:355px;top:179px;width:56px;height:24px"></div>
<div class="abs" style="left:361px;top:185px;width:12px;height:12px;background:#fff;border-radius:3px"></div>
<div class="th" style="left:413px;top:179px;width:23px;height:24px"></div>
<div class="abs" style="left:418px;top:189px;width:13px;height:4px;background:#e4e4e4;border-radius:2px"></div>
<div class="th" style="left:1px;top:205px;width:25px;height:24px;line-height:26px;text-align:left;padding-left:4px;font-size:14px">8</div>
<div class="tdw" style="left:27px;top:205px;width:100px">entry_year</div>
<div class="tdw" style="left:129px;top:205px;width:100px">入学年份</div>
<div class="tdw" style="left:231px;top:205px;width:50px">100</div>
<div class="th" style="left:283px;top:205px;width:70px;height:24px"></div>
<div class="abs" style="left:294px;top:209px;width:49px;height:17px;background:#fff;border-radius:4px;overflow:hidden"><div class="abs" style="left:7px;top:0;font-size:12px;line-height:18.500px;color:#222">left</div><div class="abs" style="right:0;top:0;width:15px;height:17px;background:linear-gradient(#6db0fb,#1769ef)"><svg width="15" height="17" viewBox="0 0 15 17"><path d="M5 6.800L7.500 4.300l2.500 2.500M5 10.200l2.500 2.500 2.500-2.500" fill="none" stroke="#fff" stroke-width="1.400" stroke-linecap="round" stroke-linejoin="round"/></svg></div></div>
<div class="th" style="left:355px;top:205px;width:56px;height:24px"></div>
<div class="abs" style="left:361px;top:211px;width:12px;height:12px;background:#fff;border-radius:3px"></div>
<div class="th" style="left:413px;top:205px;width:23px;height:24px"></div>
<div class="abs" style="left:418px;top:215px;width:13px;height:4px;background:#e4e4e4;border-radius:2px"></div>
<div class="th" style="left:1px;top:231px;width:25px;height:24px;line-height:26px;text-align:left;padding-left:4px;font-size:14px">9</div>
<div class="tdw" style="left:27px;top:231px;width:100px">school_year_ler</div>
<div class="tdw" style="left:129px;top:231px;width:100px">学制</div>
<div class="tdw" style="left:231px;top:231px;width:50px">60</div>
<div class="th" style="left:283px;top:231px;width:70px;height:24px"></div>
<div class="abs" style="left:294px;top:235px;width:49px;height:17px;background:#fff;border-radius:4px;overflow:hidden"><div class="abs" style="left:7px;top:0;font-size:12px;line-height:18.500px;color:#222">left</div><div class="abs" style="right:0;top:0;width:15px;height:17px;background:linear-gradient(#6db0fb,#1769ef)"><svg width="15" height="17" viewBox="0 0 15 17"><path d="M5 6.800L7.500 4.300l2.500 2.500M5 10.200l2.500 2.500 2.500-2.500" fill="none" stroke="#fff" stroke-width="1.400" stroke-linecap="round" stroke-linejoin="round"/></svg></div></div>
<div class="th" style="left:355px;top:231px;width:56px;height:24px"></div>
<div class="abs" style="left:361px;top:237px;width:12px;height:12px;background:#fff;border-radius:3px"></div>
<div class="th" style="left:413px;top:231px;width:23px;height:24px"></div>
<div class="abs" style="left:418px;top:241px;width:13px;height:4px;background:#e4e4e4;border-radius:2px"></div>
<div class="th" style="left:1px;top:257px;width:25px;height:24px;line-height:26px;text-align:left;padding-left:3px;font-size:14px">10</div>
<div class="tdw" style="left:27px;top:257px;width:100px">political_status</div>
<div class="tdw" style="left:129px;top:257px;width:100px">政治面貌</div>
<div class="tdw" style="left:231px;top:257px;width:50px">100</div>
<div class="th" style="left:283px;top:257px;width:70px;height:24px"></div>
<div class="abs" style="left:294px;top:261px;width:49px;height:17px;background:#fff;border-radius:4px;overflow:hidden"><div class="abs" style="left:7px;top:0;font-size:12px;line-height:18.500px;color:#222">left</div><div class="abs" style="right:0;top:0;width:15px;height:17px;background:linear-gradient(#6db0fb,#1769ef)"><svg width="15" height="17" viewBox="0 0 15 17"><path d="M5 6.800L7.500 4.300l2.500 2.500M5 10.200l2.500 2.500 2.500-2.500" fill="none" stroke="#fff" stroke-width="1.400" stroke-linecap="round" stroke-linejoin="round"/></svg></div></div>
<div class="th" style="left:355px;top:257px;width:56px;height:24px"></div>
<div class="abs" style="left:361px;top:263px;width:12px;height:12px;background:#fff;border-radius:3px"></div>
<div class="th" style="left:413px;top:257px;width:23px;height:24px"></div>
<div class="abs" style="left:418px;top:267px;width:13px;height:4px;background:#e4e4e4;border-radius:2px"></div>
<div class="th" style="left:1px;top:283px;width:25px;height:24px;line-height:26px;text-align:left;padding-left:3px;font-size:14px">11</div>
<div class="tdw" style="left:27px;top:283px;width:100px">photo</div>
<div class="tdw" style="left:129px;top:283px;width:100px">生活</div>
<div class="tdw" style="left:231px;top:283px;width:50px">100</div>
<div class="th" style="left:283px;top:283px;width:70px;height:24px"></div>
<div class="abs" style="left:294px;top:287px;width:49px;height:17px;background:#fff;border-radius:4px;overflow:hidden"><div class="abs" style="left:7px;top:0;font-size:12px;line-height:18.500px;color:#222">left</div><div class="abs" style="right:0;top:0;width:15px;height:17px;background:linear-gradient(#6db0fb,#1769ef)"><svg width="15" height="17" viewBox="0 0 15 17"><path d="M5 6.800L7.500 4.300l2.500 2.500M5 10.200l2.500 2.500 2.500-2.500" fill="none" stroke="#fff" stroke-width="1.400" stroke-linecap="round" stroke-linejoin="round"/></svg></div></div>
<div class="th" style="left:355px;top:283px;width:56px;height:24px"></div>
<div class="abs" style="left:361px;top:289px;width:12px;height:12px;background:#fff;border-radius:3px"></div>
<div class="th" style="left:413px;top:283px;width:23px;height:24px"></div>
<div class="abs" style="left:418px;top:293px;width:13px;height:4px;background:#e4e4e4;border-radius:2px"></div>
</div></div>
<div id="right" class="abs sans"><div class="abs" style="left:4px;top:14.5px;font-size:15.700px;line-height:22px;font-weight:bold;color:#111;white-space:nowrap">通用设置</div>
<div class="abs" style="left:3px;top:35px;width:395px;height:1px;background:#ccc"></div>
<div class="rl" style="left:8px;top:43px">动态列</div>
<div class="cb" style="left:130px;top:46px"></div>
<div class="rl" style="left:8px;top:75px">表格样式</div>
<div class="abs" style="left:130px;top:82px;width:0;height:0;border-left:6px solid transparent;border-right:6px solid transparent;border-top:7px solid #111"></div>
<div class="rl" style="left:28px;top:107px">边框</div>
<div class="rl" style="left:150px;top:107px">单元格</div>
<div class="radio on" style="left:194px;top:110px"></div>
<div class="rl" style="left:219.5px;top:107px">行</div>
<div class="radio" style="left:235px;top:110px"></div>
<div class="rl" style="left:28px;top:139px">紧凑显示</div>
<div class="cb on" style="left:150px;top:142px"><svg width="14" height="14" viewBox="0 0 14 14"><path d="M3.400 7.400l2.500 2.600 4.700-6" fill="none" stroke="#fff" stroke-width="1.700" stroke-linecap="round" stroke-linejoin="round"/></svg></div>
<div class="rl" style="left:28px;top:171px">行悬浮高亮</div>
<div class="cb on" style="left:150px;top:174px"><svg width="14" height="14" viewBox="0 0 14 14"><path d="M3.400 7.400l2.500 2.600 4.700-6" fill="none" stroke="#fff" stroke-width="1.700" stroke-linecap="round" stroke-linejoin="round"/></svg></div>
<div class="rl" style="left:28px;top:203px">不换行</div>
<div class="cb on" style="left:150px;top:206px"><svg width="14" height="14" viewBox="0 0 14 14"><path d="M3.400 7.400l2.500 2.600 4.700-6" fill="none" stroke="#fff" stroke-width="1.700" stroke-linecap="round" stroke-linejoin="round"/></svg></div>
<div class="rl" style="left:8px;top:235px">宽度自适应窗口</div>
<div class="cb on" style="left:130px;top:238px"><svg width="14" height="14" viewBox="0 0 14 14"><path d="M3.400 7.400l2.500 2.600 4.700-6" fill="none" stroke="#fff" stroke-width="1.700" stroke-linecap="round" stroke-linejoin="round"/></svg></div>
<div class="rl" style="left:8px;top:267px">启用分页</div>
<div class="cb on" style="left:130px;top:270px"><svg width="14" height="14" viewBox="0 0 14 14"><path d="M3.400 7.400l2.500 2.600 4.700-6" fill="none" stroke="#fff" stroke-width="1.700" stroke-linecap="round" stroke-linejoin="round"/></svg></div>
<div class="rl" style="left:28px;top:299px">分页样式</div>
<div class="abs" style="left:150px;top:300px;width:113px;height:18px;background:#fff;border-radius:4px;box-shadow:0 0 0 .5px #b0b0b0,0 1px 1px rgba(0,0,0,.25);overflow:hidden"><div class="abs" style="left:8px;top:0;font-size:11.500px;line-height:18px;color:#222;white-space:nowrap">上下+页号</div><div class="abs" style="right:0;top:0;width:15px;height:18px;background:linear-gradient(#6db0fb,#1769ef)"><svg width="15" height="18" viewBox="0 0 15 18"><path d="M4.500 7.200L7.500 4.200l3 3M4.500 10.800l3 3 3-3" fill="none" stroke="#fff" stroke-width="1.500" stroke-linecap="round" stroke-linejoin="round"/></svg></div></div>
<div class="rl" style="left:28px;top:331px">显示分页菜单</div>
<div class="cb on" style="left:150px;top:334px"><svg width="14" height="14" viewBox="0 0 14 14"><path d="M3.400 7.400l2.500 2.600 4.700-6" fill="none" stroke="#fff" stroke-width="1.700" stroke-linecap="round" stroke-linejoin="round"/></svg></div>
<div class="rl" style="left:28px;top:363px">默认分页大小</div>
<div class="abs" style="left:150px;top:363px;width:131px;height:19px;background:#fff;border:1px solid #b4b4b4;font-size:11.500px;line-height:18px;padding-left:3px;color:#222">25</div>
<div class="rl" style="left:28px;top:395px">可用分页大小</div>
<div class="abs" style="left:150px;top:395px;width:131px;height:19px;background:#fff;border:1px solid #b4b4b4;font-size:11.500px;line-height:18px;padding-left:3px;color:#999">10, 25, 50, 100</div>
<div class="rl" style="left:8px;top:427px">行操作按钮</div>
<div class="cb" style="left:130px;top:430px"></div>
<div class="rl" style="left:8px;top:459px">启用排序</div>
<div class="cb" style="left:130px;top:462px"></div>
<div class="rl" style="left:8px;top:491px">表头分组</div>
<div class="cb" style="left:130px;top:494px"></div>
<div class="rl" style="left:8px;top:523px">行序号</div>
<div class="cb on" style="left:130px;top:526px"><svg width="14" height="14" viewBox="0 0 14 14"><path d="M3.400 7.400l2.500 2.600 4.700-6" fill="none" stroke="#fff" stroke-width="1.700" stroke-linecap="round" stroke-linejoin="round"/></svg></div>
<div class="rl" style="left:8px;top:555px">多选</div>
<div class="cb" style="left:130px;top:558px"></div>
<div class="rl" style="left:8px;top:587px">服务端处理</div>
<div class="cb on" style="left:130px;top:590px"><svg width="14" height="14" viewBox="0 0 14 14"><path d="M3.400 7.400l2.500 2.600 4.700-6" fill="none" stroke="#fff" stroke-width="1.700" stroke-linecap="round" stroke-linejoin="round"/></svg></div>
<div class="abs" style="left:4px;top:625.5px;font-size:15.700px;line-height:22px;font-weight:bold;color:#111;white-space:nowrap">其他设置</div>
<div class="abs" style="left:3px;top:646px;width:395px;height:1px;background:#ccc"></div></div>
<div id="bot" class="abs"><div class="abs" style="left:102px;top:-1px;width:210px;height:31px;background:#fff;border:1px solid #c8c8c8;border-top:none"></div>
<div class="abs" style="left:12px;top:10px;color:#222"><svg width="11" height="11" viewBox="0 0 12.500 12" fill="currentColor" style=""><path d="M6 .6l1.200 1.200L4 5h8v1.800H4L7.200 10 6 11.200.6 5.900z"/></svg></div>
<div class="abs sans" style="left:30px;top:7px;font-size:12px;line-height:18px;color:#333;white-space:nowrap">返回流程图</div>
<div class="abs" style="left:114px;top:9px;color:#222"><svg width="12" height="11" viewBox="0 0 12 12" fill="currentColor" style=""><rect x="0" y="0.6" width="3.4" height="3" /><rect x="0" y="4.5" width="3.4" height="3" /><rect x="0" y="8.4" width="3.4" height="3" /><rect x="4.3" y="0.6" width="3.4" height="3" /><rect x="4.3" y="4.5" width="3.4" height="3" /><rect x="4.3" y="8.4" width="3.4" height="3" /><rect x="8.6" y="0.6" width="3.4" height="3" /><rect x="8.6" y="4.5" width="3.4" height="3" /><rect x="8.6" y="8.4" width="3.4" height="3" /></svg></div>
<div class="abs sans" style="left:134px;top:7px;font-size:12px;line-height:18px;color:#333;white-space:nowrap">窗口</div>
<div class="abs" style="left:160.5px;top:7px;font-size:12px;line-height:18px;color:#2c62ad;font-weight:bold;white-space:nowrap">11</div>
<div class="abs" style="left:174.5px;top:10px;color:#222"><svg width="11" height="11" viewBox="0 0 12.500 12" fill="currentColor" style=""><path d="M6.600.6L5.400 1.800 8.600 5h-8v1.800h8L5.400 10l1.200 1.200L12 5.900z"/></svg></div>
<div class="abs sans" style="left:193px;top:7px;font-size:12px;line-height:18px;color:#333;white-space:nowrap">组件配置</div>
<div class="abs" style="left:243px;top:7px;font-size:12px;line-height:18px;color:#1b73e8;font-weight:bold;white-space:nowrap">alternative</div>
<div class="abs" style="left:808px;top:3px;width:74px;height:26px;background:linear-gradient(#3e3e3e 0,#383838 48%,#141414 52%,#262626 100%);border:1px solid #1a1a1a;border-radius:4px;box-shadow:0 0 1px #000"></div>
<div class="abs" style="left:816.5px;top:9.799999999999955px;color:#e8e8e8"><svg width="10" height="12" viewBox="0 0 11 12" fill="currentColor" style=""><path d="M0 0l11 6-11 6z"/></svg></div>
<div class="abs sans" style="left:830px;top:7px;font-size:10.700px;line-height:18px;color:#e0e0e0;font-weight:300;white-space:nowrap">预览页面</div>
<div class="abs" style="left:886px;top:3px;width:53px;height:26px;background:linear-gradient(#3e3e3e 0,#383838 48%,#141414 52%,#262626 100%);border:1px solid #1a1a1a;border-radius:4px;box-shadow:0 0 1px #000"></div>
<div class="abs" style="left:895px;top:11px;color:#e8e8e8"><svg width="10" height="10" viewBox="0 0 12 12" fill="currentColor" style=""><path fill-rule="evenodd" d="M1 0h8l3 3v8a1 1 0 0 1-1 1H1a1 1 0 0 1-1-1V1a1 1 0 0 1 1-1zM2 1.400v3h6v-3zM6 6.200a2 2 0 1 0 .01 0z"/></svg></div>
<div class="abs sans" style="left:908.5px;top:7px;font-size:10.700px;line-height:18px;color:#e0e0e0;font-weight:300;white-space:nowrap">保存</div></div>
</body>
</html>
